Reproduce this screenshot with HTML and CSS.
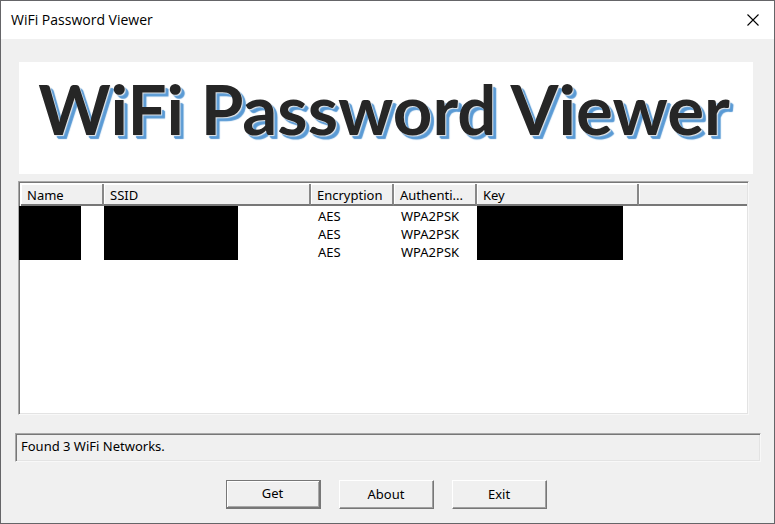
FILE: index.html
```html
<!DOCTYPE html>
<html lang="en">
<head>
  <meta charset="UTF-8">
  <title>WiFi Password Viewer</title>
  <link rel="stylesheet" href="styles.css">
</head>
<body>

<div class="window">
  <header class="titlebar">
    <span>WiFi Password Viewer</span>
    <button class="close" aria-label="Close">
      <svg width="12" height="12" viewBox="0 0 12 12"><path d="M0.5 0.5L11.5 11.5M11.5 0.5L0.5 11.5" stroke="#000" stroke-width="1.1"/></svg>
    </button>
  </header>

  <main class="content">
    <h1 class="banner">WiFi Password Viewer</h1>

    <!-- network list -->
    <div class="list">
      <table>
        <colgroup>
          <col class="c-name"><col class="c-ssid"><col class="c-enc"><col class="c-auth"><col class="c-key"><col>
        </colgroup>
        <thead>
          <tr><th>Name</th><th>SSID</th><th>Encryption</th><th>Authenti...</th><th>Key</th><th class="rest"></th></tr>
        </thead>
        <tbody>
          <tr>
            <td rowspan="3" class="hidden"><div class="mask mask-name"></div></td>
            <td rowspan="3" class="hidden"><div class="mask mask-ssid"></div></td>
            <td>AES</td><td>WPA2PSK</td>
            <td rowspan="3" class="hidden"><div class="mask mask-key"></div></td>
            <td></td>
          </tr>
          <tr><td>AES</td><td>WPA2PSK</td><td></td></tr>
          <tr><td>AES</td><td>WPA2PSK</td><td></td></tr>
        </tbody>
      </table>
    </div>

    <p class="status">Found 3 WiFi Networks.</p>

    <div class="buttons">
      <button class="btn default">Get</button>
      <button class="btn">About</button>
      <button class="btn">Exit</button>
    </div>
  </main>
</div>

</body>
</html>
```
FILE: styles.css
```css
*{box-sizing:border-box}
body{margin:0;background:#f0f0f0;color:#000;font:13px/18px "Noto Sans",Tahoma,sans-serif}
button{font:inherit;color:inherit;margin:0;padding:0}

.window{display:flex;flex-direction:column;min-height:100vh;border:1px solid #656568;background:#f0f0f0}

.titlebar{display:flex;align-items:center;justify-content:space-between;height:38px;padding:0 15px 0 10px;background:#fff;font:14px/20px "Open Sans","Segoe UI",sans-serif}
.close{display:flex;border:0;background:none}

.content{display:flex;flex:1;flex-direction:column;padding:23px 13px 14px 14px}

.banner{margin:0 8px 7px 4px;height:112px;padding-right:4px;background:#fff;color:#262626;font:bold 69px/94px Lato,Calibri,sans-serif;text-align:center;white-space:nowrap;text-shadow:1px 1px 1px #e8e8e8,3px 3px 1px #5b9bd5,4px 4px 1px #5b9bd5}

/* sunken boxes */
.list,.status{border:1px solid;border-color:#a8a8a8 #f8f8f8 #f8f8f8 #a8a8a8;box-shadow:inset 1px 1px #777,inset -1px -1px #e3e3e3}
.list{flex:1;margin:0 12px 18px 3px;padding:2px 1px 1px 2px;background:#fff}
.status{margin:0 0 18px;height:29px;padding:3px 5px}

table{width:100%;border-collapse:separate;border-spacing:0;table-layout:fixed}
.c-name,.c-enc,.c-auth{width:83px}
.c-ssid{width:207px}
.c-key{width:162px}
th{height:22px;padding:2px 0 0 6px;text-align:left;font-weight:normal;line-height:18px;white-space:nowrap;background:#f0f0f0;border-bottom:2px solid #777;border-right:2px solid #888;box-shadow:inset 1px 1px #fff}
th.rest{border-right:0}
td{height:18px;padding:2px 0 0 7px;line-height:16px}
td.hidden{padding:0;vertical-align:top}
.mask{height:54px;background:#000}
.mask-name{width:62px;margin-left:-2px}
.mask-ssid{width:134px}
.mask-key{width:146px}

.buttons{display:flex;justify-content:center;gap:18px;padding-right:4px}
.btn{width:95px;height:29px;padding-bottom:2px;background:#f0f0f0;border:1px solid;border-color:#fff #777 #777 #fff;box-shadow:inset -1px -1px #a0a0a0}
.btn.default{border-width:1px 2px 2px 1px;border-color:#777;box-shadow:inset 1px 1px #fff,inset -1px -1px #a8a8a8}
```
